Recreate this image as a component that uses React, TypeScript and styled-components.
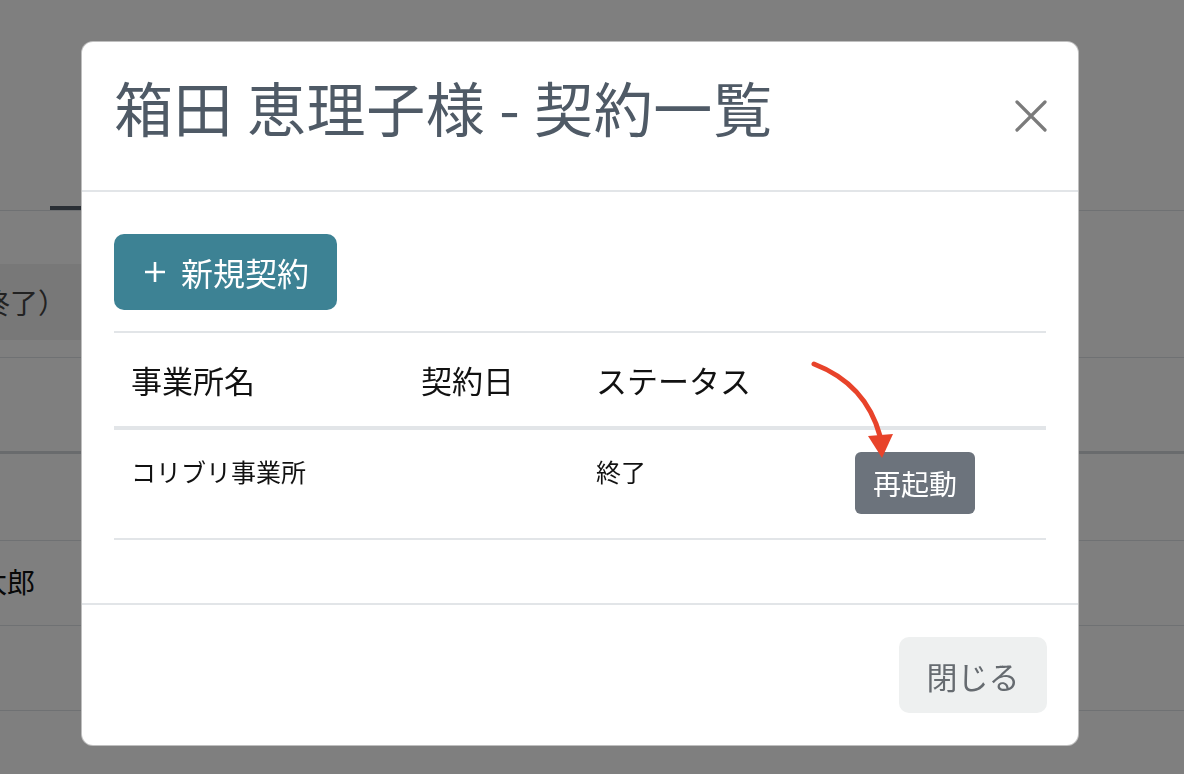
import styled, { createGlobalStyle } from "styled-components";

const GlobalStyle = createGlobalStyle`
  html, body {
    margin: 0;
    padding: 0;
    width: 1184px;
    height: 774px;
    overflow: hidden;
    background: #ffffff;
    font-family: "Noto Sans CJK JP", "Noto Sans", sans-serif;
    color: #212529;
  }
  * {
    box-sizing: border-box;
  }
`;

/* ---------- page behind the dialog ---------- */

const Page = styled.div`
  width: 1184px;
  height: 774px;
  overflow: hidden;
`;

const TopBar = styled.div`
  height: 211px;
  border-bottom: 1px solid #dee2e6;
  display: flex;
  align-items: flex-end;
  padding-left: 50px;
`;

const ActiveTab = styled.div`
  width: 180px;
  height: 4px;
  background: #555f6b;
`;

const BgRow = styled.div<{ h: number; thick?: boolean }>`
  height: ${(p) => p.h}px;
  border-bottom: ${(p) => (p.thick ? "3px solid #d3d7db" : "1px solid #dee2e6")};
  display: flex;
  align-items: center;
  overflow: hidden;
`;

const StatusPill = styled.div`
  align-self: flex-start;
  margin-top: 53px;
  height: 76px;
  width: 300px;
  background: #f1f1f1;
  display: flex;
  align-items: center;
  font-size: 28px;
  color: #444;
`;

const Clipped = styled.span<{ shift: number }>`
  margin-left: ${(p) => -p.shift}px;
  white-space: nowrap;
  font-size: 28px;
`;

/* ---------- dialog ---------- */

const Overlay = styled.div`
  position: fixed;
  inset: 0;
  background: rgba(0, 0, 0, 0.5);
  padding: 41px 0 0 81px;
`;

const Dialog = styled.div`
  position: relative;
  width: 998px;
  height: 705px;
  background: #fff;
  border: 1px solid rgba(0, 0, 0, 0.25);
  border-radius: 12px;
  display: flex;
  flex-direction: column;
`;

const Header = styled.div`
  height: 150px;
  padding: 0 32px 18px 32px;
  border-bottom: 2px solid #e2e5e8;
  display: flex;
  align-items: center;
  justify-content: space-between;
`;

const Title = styled.h2`
  margin: 0;
  font-size: 59px;
  font-weight: 400;
  line-height: 1.2;
  color: #4f5a66;
  letter-spacing: 0.6px;
`;

const CloseX = styled.button`
  width: 36px;
  height: 36px;
  padding: 0;
  border: none;
  background: none;
  display: flex;
  align-items: center;
  justify-content: center;
  margin-top: 18px;
  margin-right: -3px;
`;

const Body = styled.div`
  flex: 1;
  padding: 42px 32px 0;
`;

const PrimaryButton = styled.button`
  width: 223px;
  height: 76px;
  border: none;
  border-radius: 10px;
  background: #3d8294;
  color: #fff;
  font-family: inherit;
  font-size: 32px;
  display: flex;
  align-items: center;
  padding: 0 0 0 30px;
  gap: 15px;
  line-height: 1;
`;

const Table = styled.table`
  width: 100%;
  margin-top: 21px;
  border-collapse: collapse;
  border-top: 2px solid #e2e5e8;
`;

const Th = styled.th<{ w: number }>`
  width: ${(p) => p.w}px;
  height: 96px;
  padding: 0 17px;
  text-align: left;
  font-size: 31px;
  font-weight: 400;
  color: #111;
  border-bottom: 4px solid #e2e5e8;
  vertical-align: middle;
`;

const Td = styled.td`
  padding: 22px 17px 24px;
  font-size: 25px;
  line-height: 38px;
  color: #111;
  vertical-align: top;
  border-bottom: 2px solid #e2e5e8;
`;

const SecondaryButton = styled.button`
  height: 62px;
  padding: 0 18px;
  border: none;
  border-radius: 6px;
  background: #6c737c;
  color: #fff;
  font-family: inherit;
  font-size: 28px;
  line-height: 1;
`;

const Footer = styled.div`
  height: 142px;
  border-top: 2px solid #e2e5e8;
  padding: 32px 31px 0;
  display: flex;
  justify-content: flex-end;
  align-items: flex-start;
`;

const LightButton = styled.button`
  width: 148px;
  height: 76px;
  border: none;
  border-radius: 10px;
  background: #eef0f0;
  color: #666b70;
  font-family: inherit;
  font-size: 31px;
  line-height: 1;
`;

const Annotation = styled.svg`
  position: absolute;
  left: 718px;
  top: 308px;
  overflow: visible;
`;

export default function App() {
  return (
    <>
      <GlobalStyle />
      <Page>
        <TopBar>
          <ActiveTab />
        </TopBar>
        <BgRow h={147}>
          <StatusPill>
            <Clipped shift={46}>（終了）</Clipped>
          </StatusPill>
        </BgRow>
        <BgRow h={96} thick />
        <BgRow h={87} />
        <BgRow h={85}>
          <Clipped shift={21} style={{ marginTop: "-4px", color: "#111" }}>
            太郎
          </Clipped>
        </BgRow>
        <BgRow h={85} />
      </Page>

      <Overlay>
        <Dialog>
          <Header>
            <Title>箱田 恵理子様 - 契約一覧</Title>
            <CloseX aria-label="close">
              <svg width="32" height="32" viewBox="0 0 32 32">
                <path d="M2 2 L30 30 M30 2 L2 30" stroke="#7b7b7b" strokeWidth="3.2" strokeLinecap="round" />
              </svg>
            </CloseX>
          </Header>

          <Body>
            <PrimaryButton>
              <svg width="22" height="22" viewBox="0 0 22 22">
                <path d="M11 1 V21 M1 11 H21" stroke="#fff" strokeWidth="2.6" />
              </svg>
              新規契約
            </PrimaryButton>

            <Table>
              <thead>
                <tr>
                  <Th w={290}>事業所名</Th>
                  <Th w={175}>契約日</Th>
                  <Th w={259}>ステータス</Th>
                  <Th w={208}></Th>
                </tr>
              </thead>
              <tbody>
                <tr>
                  <Td>コリブリ事業所</Td>
                  <Td></Td>
                  <Td>終了</Td>
                  <Td>
                    <SecondaryButton>再起動</SecondaryButton>
                  </Td>
                </tr>
              </tbody>
            </Table>
          </Body>

          <Footer>
            <LightButton>閉じる</LightButton>
          </Footer>

          <Annotation width="110" height="120" viewBox="0 0 110 120">
            <path d="M14 14 Q 66 34 80 86" fill="none" stroke="#e8432a" strokeWidth="5" strokeLinecap="round" />
            <polygon points="68,86 93,84 82,108" fill="#e8432a" />
          </Annotation>
        </Dialog>
      </Overlay>
    </>
  );
}
